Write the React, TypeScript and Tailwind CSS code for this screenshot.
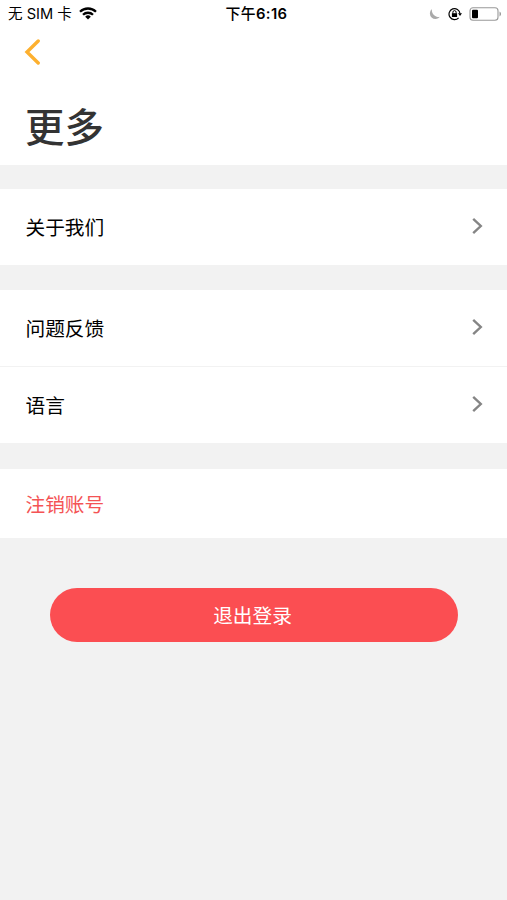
import React from "react";

interface RowProps {
  label: string;
  className?: string;
}

const StatusBar = () => {
  return (
    <div className="flex h-[27px] items-center justify-between pl-[8px] pr-[5px] text-[14px] leading-none text-black">
      <div className="flex w-[140px] items-center gap-[7.5px]">
        <span className="whitespace-nowrap pt-[2px] text-[14.6px]">无 SIM 卡</span>
        <svg width="18" height="13" viewBox="0 0 18 13" fill="none" stroke="#000" strokeWidth="2.3">
          <path d="M1 4.8a11.4 11.4 0 0 1 16 0" />
          <path d="M4 7.8a7.1 7.1 0 0 1 10 0" />
          <path d="M9 12.5 6.2 9.7a4 4 0 0 1 5.6 0Z" fill="#000" stroke="none" />
        </svg>
      </div>
      <span className="whitespace-nowrap pt-[2px] pl-[3px] text-[14.8px] font-medium tracking-[0.4px]">
        下午<span className="font-semibold">6:16</span>
      </span>
      <div className="flex w-[140px] items-center justify-end gap-[7px]">
        <svg width="12" height="12" viewBox="0 0 12 12">
          <path d="M3 1A5.6 5.6 0 1 0 11 8.7 6.6 6.6 0 0 1 3 1Z" fill="#aaa" />
        </svg>
        <svg width="14" height="14" viewBox="0 0 14 14" fill="none" stroke="#000">
          <path d="M10.6 10.8A5.5 5.5 0 1 1 12 6.5" strokeWidth="1.2" />
          <path d="M10 6.3h4l-2 2.7Z" fill="#000" stroke="none" />
          <rect x="3.9" y="6.2" width="5.2" height="3.8" fill="#000" stroke="none" />
          <path d="M4.9 6.5V5.2a1.6 1.6 0 0 1 3.2 0v1.3" />
        </svg>
        <svg width="33" height="14" viewBox="0 0 33 14">
          <rect x="1" y="0.8" width="28" height="12.4" rx="3" fill="none" stroke="#999" strokeWidth="1.1" />
          <rect x="3" y="2.8" width="6" height="8.4" rx="1" fill="#000" />
          <path d="M30.5 4.6c2 .8 2 4 0 4.8Z" fill="#999" />
        </svg>
      </div>
    </div>
  );
};

const Row = ({ label, className = "" }: RowProps) => {
  return (
    <button className={`flex h-[76px] w-full items-center justify-between bg-white pl-[25.5px] pr-[24px] ${className}`}>
      <span className="pt-[3px] text-[19.7px] text-black">{label}</span>
      <svg className="mb-[2px]" width="12" height="18" viewBox="0 0 12 18" fill="none" stroke="#858585" strokeWidth="2.4">
        <path d="m2.2 1.8 7.6 7.2-7.6 7.2" />
      </svg>
    </button>
  );
};

const App = () => {
  return (
    <div className="min-h-screen bg-[#f2f2f2] font-['Inter','Noto_Sans_CJK_SC',sans-serif]">
      <header className="h-[165px] bg-white">
        <StatusBar />
        <button className="ml-[24px] mt-[12px] block">
          <svg width="17" height="26" viewBox="0 0 17 26" fill="none" stroke="#fdb02f" strokeWidth="3.4" strokeLinecap="round">
            <path d="M14.2 2 3 13l11.2 11" />
          </svg>
        </button>
        <h1 className="ml-[25px] mt-[37px] text-[39.4px] leading-[52px] font-medium text-[#333]">更多</h1>
      </header>

      <main>
        <div className="mt-[24px]">
          <Row label="关于我们" />
        </div>
        <div className="mt-[25px]">
          <Row label="问题反馈" />
          <Row label="语言" className="mt-px" />
        </div>
        <button className="mt-[26px] flex h-[69px] w-full items-center bg-white pt-[4px] pl-[25.5px] text-[19.7px] text-[#f45355]">
          注销账号
        </button>
        <button className="mx-auto mt-[50px] flex h-[54px] w-[408px] items-center justify-center rounded-full bg-[#fb4e52] pt-[3px] pr-[2px] text-[19.7px] text-white">
          退出登录
        </button>
      </main>
    </div>
  );
};

export default App;
